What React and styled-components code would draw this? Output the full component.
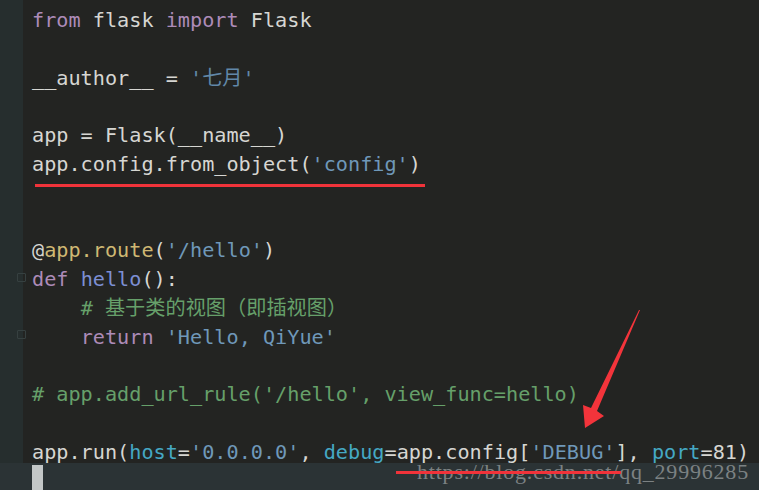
import React from "react";
import styled, { createGlobalStyle } from "styled-components";

const GlobalStyle = createGlobalStyle`
  html, body {
    margin: 0;
    padding: 0;
    background: #232422;
  }
`;

const Screen = styled.div`
  position: relative;
  width: 759px;
  height: 490px;
  overflow: hidden;
  display: flex;
  flex-direction: column;
  background: #232422;
`;

const CodeArea = styled.div`
  display: flex;
  height: 463px;
`;

const Gutter = styled.div`
  width: 23px;
  background: #262e2e;
  position: relative;
  .fold {
    position: absolute;
    left: 17px;
    width: 7px;
    height: 7px;
    border: 1px solid #364040;
    border-radius: 1px;
  }
`;

const Lines = styled.div`
  flex: 1;
  padding: 6px 0 0 9px;
  font-family: "DejaVu Sans Mono", "Noto Sans CJK SC", monospace;
  font-size: 20.2px;
  line-height: 28.8px;
  color: #d6d6d2;
  white-space: pre;
`;

const Line = styled.div`
  height: 28.8px;
`;

const Tok = styled.span`
  color: ${(p) =>
    ({
      kw: "#ad8bb8",
      str: "#6f98b9",
      cjkstr: "#6188a8",
      deco: "#cfb873",
      fn: "#7d8fd4",
      com: "#66a06a",
      arg: "#45a8c4",
      plain: "#d6d6d2",
    }[p.$k] || "#d6d6d2")};
`;

const BottomBar = styled.div`
  flex: 1;
  background: #2b3335;
  padding-left: 32px;
  display: flex;
  align-items: flex-end;
`;

const Cursor = styled.div`
  width: 11px;
  height: 25px;
  background: #c3c7c7;
`;

const Underline = styled.div`
  position: absolute;
  left: ${(p) => p.$x}px;
  top: ${(p) => p.$y}px;
  width: ${(p) => p.$w}px;
  height: 3px;
  background: #f0333a;
`;

const Watermark = styled.div`
  position: absolute;
  left: 417px;
  top: 459px;
  font-family: "Liberation Serif", serif;
  font-size: 22px;
  letter-spacing: 0.8px;
  color: rgba(205, 210, 210, 0.5);
  white-space: nowrap;
`;

const Arrow = styled.svg`
  position: absolute;
  left: 0;
  top: 0;
  pointer-events: none;
`;

const code = [
  [["kw", "from"], ["plain", " flask "], ["kw", "import"], ["plain", " Flask"]],
  [],
  [["plain", "__author__ = "], ["cjkstr", "'七月'"]],
  [],
  [["plain", "app = Flask(__name__)"]],
  [["plain", "app.config.from_object("], ["str", "'config'"], ["plain", ")"]],
  [],
  [],
  [["plain", "@"], ["deco", "app.route"], ["plain", "("], ["str", "'/hello'"], ["plain", ")"]],
  [["kw", "def"], ["plain", " "], ["fn", "hello"], ["plain", "():"]],
  [["plain", "    "], ["com", "# 基于类的视图（即插视图）"]],
  [["plain", "    "], ["kw", "return"], ["plain", " "], ["str", "'Hello, QiYue'"]],
  [],
  [["com", "# app.add_url_rule('/hello', view_func=hello)"]],
  [],
  [
    ["plain", "app.run("],
    ["arg", "host"],
    ["plain", "="],
    ["str", "'0.0.0.0'"],
    ["plain", ", "],
    ["arg", "debug"],
    ["plain", "=app.config["],
    ["str", "'DEBUG'"],
    ["plain", "], "],
    ["arg", "port"],
    ["plain", "=81)"],
  ],
];

export default function App() {
  return (
    <Screen>
      <GlobalStyle />
      <CodeArea>
        <Gutter>
          <span className="fold" style={{ top: 273 }} />
          <span className="fold" style={{ top: 330 }} />
        </Gutter>
        <Lines>
          {code.map((toks, i) => (
            <Line key={i}>
              {toks.map(([k, t], j) => (
                <Tok key={j} $k={k}>
                  {t}
                </Tok>
              ))}
            </Line>
          ))}
        </Lines>
      </CodeArea>
      <BottomBar>
        <Cursor />
      </BottomBar>

      <Underline $x={35} $y={184} $w={390} />
      <Watermark>https://blog.csdn.net/qq_29996285</Watermark>
      <Underline $x={396} $y={471} $w={225} />
      <Arrow width="759" height="490" viewBox="0 0 759 490">
        <polygon
          points="640,310 597,411 604,416 585,428 583,405 591,408 639,310"
          fill="#f3343b"
        />
      </Arrow>
    </Screen>
  );
}
